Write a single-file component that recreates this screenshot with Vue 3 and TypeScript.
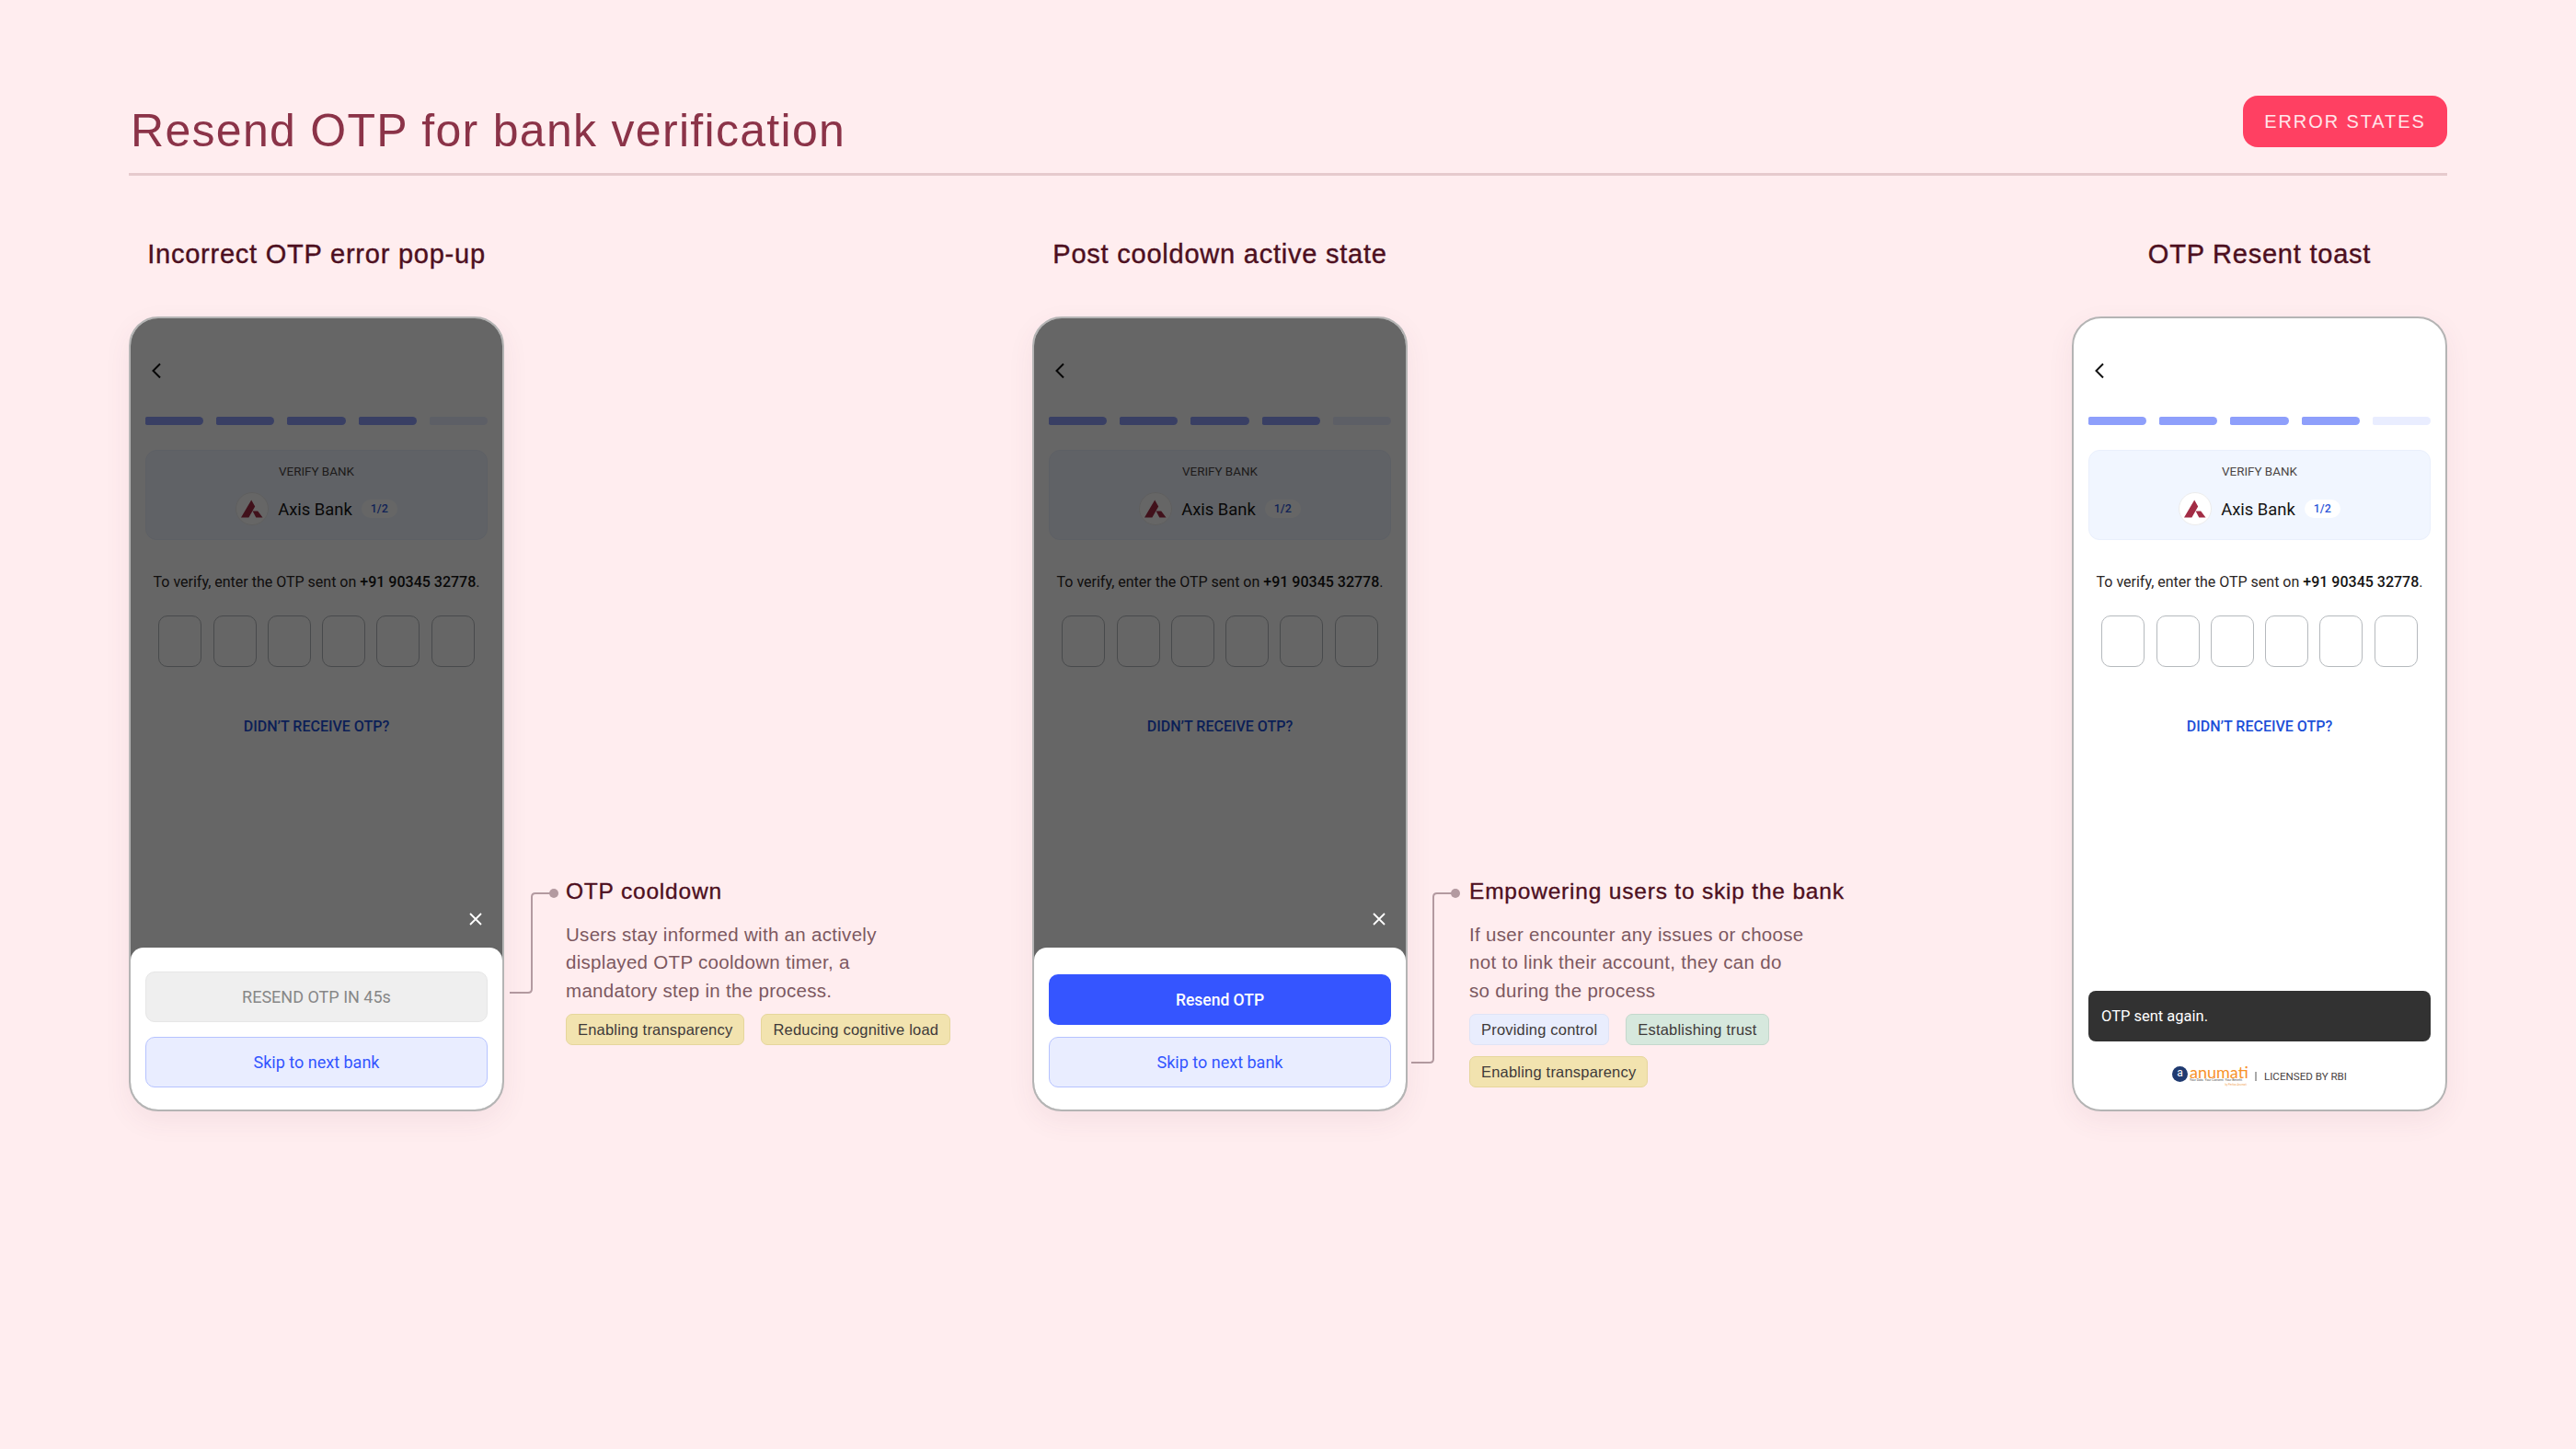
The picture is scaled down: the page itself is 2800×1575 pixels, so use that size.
<template>
  <div class="page">
    <header class="top">
      <h1>Resend OTP for bank verification</h1>
      <span class="badge">ERROR STATES</span>
    </header>

    <div class="row">
      <section v-for="s in screens" :key="s.id" class="group" :class="'group-' + s.id">
        <div class="col">
          <h2>{{ s.title }}</h2>
          <div class="phone">
            <div class="screen">
              <svg class="back" width="24" height="24" viewBox="0 0 24 24" fill="none">
                <path d="M16 4.5 8.5 12l7.5 7.5" stroke="#111" stroke-width="2" />
              </svg>
              <div class="progress">
                <i v-for="n in 5" :key="n" :class="{ done: n < 5 }"></i>
              </div>
              <div class="bank-card">
                <div class="verify">VERIFY BANK</div>
                <div class="bank-row">
                  <span class="bank-logo">
                    <svg width="24" height="20" viewBox="0 0 24 20">
                      <path d="M0 19.5 11.2 0.5l4 7L8.4 19.5zM12.6 12.5h5.6l5.3 7h-7.2z" fill="#a22c45" />
                    </svg>
                  </span>
                  <span class="bank-name">Axis Bank</span>
                  <span class="count">1/2</span>
                </div>
              </div>
              <p class="hint">To verify, enter the OTP sent on <b>+91 90345 32778</b>.</p>
              <div class="otp">
                <i v-for="n in 6" :key="n"></i>
              </div>
              <div class="link">DIDN’T RECEIVE OTP?</div>

              <template v-if="s.id === 'toast'">
                <div class="toast">OTP sent again.</div>
                <div class="foot">
                  <span class="logo-mark">a</span>
                  <span class="logo-text">
                    <span class="logo-name">anumati</span>
                    <span class="logo-tag">Your Data. Your Consent. Your Benefit.</span>
                    <span class="logo-by">by Perfios Anumati</span>
                  </span>
                  <span class="sep"></span>
                  <span class="rbi">LICENSED BY RBI</span>
                </div>
              </template>
            </div>

            <template v-if="s.resend">
              <div class="dim"></div>
              <div class="sheet">
                <svg class="close" width="16" height="16" viewBox="0 0 16 16" fill="none">
                  <path d="M2 2l12 12M14 2 2 14" stroke="#fff" stroke-width="1.8" />
                </svg>
                <div class="btn" :class="s.active ? 'primary' : 'disabled'">{{ s.resend }}</div>
                <div class="btn skip">Skip to next bank</div>
              </div>
            </template>
          </div>
        </div>

        <div v-if="s.note" class="note">
          <svg class="wire" width="54" height="210" viewBox="0 0 54 210" fill="none">
            <path :d="`M0 ${s.note.wireY}H20q4 0 4-4V20q0-4 4-4H48`" stroke="#b39aa0" stroke-width="2" />
            <circle cx="48" cy="16" r="5" fill="#b39aa0" />
          </svg>
          <div class="note-body">
            <h3>{{ s.note.title }}</h3>
            <p>
              <span v-for="line in s.note.lines" :key="line">{{ line }}</span>
            </p>
            <div class="tags">
              <span v-for="t in s.note.tags" :key="t.label" class="tag" :class="t.tone">{{ t.label }}</span>
            </div>
          </div>
        </div>
      </section>
    </div>
  </div>
</template>

<script setup lang="ts">
interface Tag {
  label: string;
  tone: "yellow" | "blue" | "green";
}

interface Screen {
  id: string;
  title: string;
  resend?: string;
  active?: boolean;
  note?: { title: string; lines: string[]; tags: Tag[]; wireY: number };
}

const screens: Screen[] = [
  {
    id: "cooldown",
    title: "Incorrect OTP error pop-up",
    resend: "RESEND OTP IN 45s",
    note: {
      title: "OTP cooldown",
      lines: [
        "Users stay informed with an actively",
        "displayed OTP cooldown timer, a",
        "mandatory step in the process.",
      ],
      tags: [
        { label: "Enabling transparency", tone: "yellow" },
        { label: "Reducing cognitive load", tone: "yellow" },
      ],
      wireY: 124,
    },
  },
  {
    id: "active",
    title: "Post cooldown active state",
    resend: "Resend OTP",
    active: true,
    note: {
      title: "Empowering users to skip the bank",
      lines: [
        "If user encounter any issues or choose",
        "not to link their account, they can do",
        "so during the process",
      ],
      tags: [
        { label: "Providing control", tone: "blue" },
        { label: "Establishing trust", tone: "green" },
        { label: "Enabling transparency", tone: "yellow" },
      ],
      wireY: 200,
    },
  },
  { id: "toast", title: "OTP Resent toast" },
];
</script>

<style>
html,
body {
  margin: 0;
  background: #ffedef;
}
</style>

<style scoped>
.page {
  width: 2800px;
  height: 1575px;
  box-sizing: border-box;
  padding: 104px 140px 0;
  font-family: "Liberation Sans", Arial, sans-serif;
  overflow: hidden;
}

.top {
  display: flex;
  justify-content: space-between;
  align-items: flex-start;
  height: 84px;
  border-bottom: 3px solid #e6cacd;
}

h1 {
  margin: 10px 0 0 2px;
  font-size: 50px;
  line-height: 56px;
  font-weight: 400;
  letter-spacing: 1.3px;
  color: #8b3348;
}

.badge {
  width: 222px;
  height: 56px;
  display: flex;
  align-items: center;
  justify-content: center;
  border-radius: 16px;
  background: #ff4062;
  color: #ffe6ea;
  font-size: 20px;
  letter-spacing: 1.9px;
}

.row {
  display: flex;
}

.group {
  display: flex;
  align-items: flex-end;
}

.group-cooldown {
  width: 982px;
}

.group-active {
  width: 1130px;
}

.col {
  width: 408px;
}

h2 {
  margin: 0;
  height: 153px;
  box-sizing: border-box;
  padding-top: 68px;
  text-align: center;
  font-size: 29px;
  line-height: 34px;
  font-weight: 400;
  letter-spacing: 0.77px;
  color: #4d0f20;
  -webkit-text-stroke: 0.4px #4d0f20;
}

.phone {
  position: relative;
  width: 408px;
  height: 864px;
  box-sizing: border-box;
  border: 2px solid #b4b4b4;
  border-radius: 32px;
  background: #fff;
  box-shadow: 0 10px 30px rgba(120, 60, 90, 0.07);
  font-family: Roboto, Arial, sans-serif;
}

.screen {
  height: 100%;
  display: flex;
  flex-direction: column;
  box-sizing: border-box;
  padding: 45px 16px 0;
  border-radius: 30px;
  overflow: hidden;
}

.back {
  display: block;
  flex: none;
}

.progress {
  display: flex;
  gap: 14px;
  margin-top: 38px;
}

.progress i {
  flex: 1;
  height: 9px;
  border-radius: 2px 5px 5px 2px;
  background: #e9edff;
}

.progress i.done {
  background: #8e9ffb;
}

.bank-card {
  margin-top: 27px;
  height: 98px;
  box-sizing: border-box;
  border: 1px solid #e9effc;
  border-radius: 12px;
  background: #f1f6ff;
  text-align: center;
  flex: none;
}

.verify {
  margin-top: 14px;
  font-size: 13.4px;
  line-height: 18px;
  color: #4b4545;
}

.bank-row {
  display: flex;
  align-items: center;
  justify-content: center;
  gap: 10px;
  margin-top: 13px;
}

.bank-logo {
  width: 36px;
  height: 36px;
  display: flex;
  align-items: center;
  justify-content: center;
  box-sizing: border-box;
  border: 1px solid #ececec;
  border-radius: 50%;
  background: #fff;
}

.bank-name {
  font-size: 18.4px;
  color: #141414;
}

.count {
  height: 20px;
  padding: 0 10px;
  border-radius: 10px;
  background: #fff;
  color: #2f57d8;
  font-size: 12.5px;
  font-weight: 500;
  line-height: 20px;
}

.hint {
  margin: 36px 0 0;
  text-align: center;
  font-size: 16px;
  line-height: 20px;
  white-space: nowrap;
  color: #2b2626;
}

.hint b {
  font-weight: 500;
  color: #141414;
}

.otp {
  display: flex;
  justify-content: center;
  gap: 12.3px;
  margin-top: 26px;
}

.otp i {
  width: 47px;
  height: 56px;
  box-sizing: border-box;
  border: 1px solid #b5b9bd;
  border-radius: 10px;
}

.link {
  margin-top: 55px;
  text-align: center;
  font-size: 16px;
  line-height: 20px;
  font-weight: 500;
  color: #1d4fd8;
}

.toast {
  margin-top: auto;
  height: 55px;
  flex: none;
  box-sizing: border-box;
  padding-left: 14px;
  display: flex;
  align-items: center;
  border-radius: 8px;
  background: #323232;
  color: #fff;
  font-size: 16.5px;
}

.foot {
  height: 74px;
  flex: none;
  display: flex;
  align-items: center;
  justify-content: center;
}

.logo-mark {
  width: 17px;
  height: 17px;
  margin-top: -4px;
  border-radius: 50%;
  background: #1f3a70;
  color: #fff;
  font-size: 12px;
  line-height: 15px;
  text-align: center;
}

.logo-text {
  display: flex;
  flex-direction: column;
  margin-left: 2px;
  width: 62px;
}

.logo-name {
  font-family: Lato, sans-serif;
  font-size: 18px;
  line-height: 14px;
  color: #f7922a;
}

.logo-tag {
  font-size: 3.4px;
  line-height: 5px;
  white-space: nowrap;
  color: #555;
}

.logo-by {
  font-size: 2.8px;
  line-height: 4px;
  text-align: right;
  color: #f2a65a;
}

.sep {
  width: 2px;
  height: 10px;
  margin: 2px 8px 0 9px;
  background: #a9a9a9;
}

.rbi {
  font-size: 11.6px;
  margin-top: 2px;
  color: #4a4444;
  white-space: nowrap;
}

.dim {
  position: absolute;
  inset: 0;
  border-radius: 30px;
  background: rgba(0, 0, 0, 0.6);
}

.sheet {
  position: absolute;
  left: 0;
  right: 0;
  bottom: 0;
  height: 176px;
  box-sizing: border-box;
  padding: 0 16px 24px;
  display: flex;
  flex-direction: column;
  justify-content: flex-end;
  background: #fff;
  border-radius: 14px 14px 30px 30px;
}

.close {
  position: absolute;
  top: -39px;
  right: 21px;
}

.btn {
  height: 55px;
  flex: none;
  box-sizing: border-box;
  display: flex;
  align-items: center;
  justify-content: center;
  border-radius: 10px;
  font-size: 18px;
}

.disabled {
  margin-bottom: 16px;
  background: #efefef;
  border: 1px solid #e6e6e6;
  color: #878787;
}

.primary {
  margin-bottom: 13px;
  background: #3555ff;
  color: #fff;
  font-size: 17.5px;
  font-weight: 500;
}

.skip {
  background: #e9edff;
  border: 1px solid #b6c3ff;
  color: #3355ff;
}

.note {
  display: flex;
  height: 253px;
  margin-left: 6px;
}

.group-active .note {
  margin-left: 4px;
}

.wire {
  flex: none;
  display: block;
}

.note-body {
  width: 420px;
  margin-left: 7px;
}

.group-active .note-body {
  margin-left: 9px;
}

h3 {
  margin: 0;
  font-size: 24.5px;
  line-height: 28px;
  font-weight: 400;
  letter-spacing: 0.8px;
  white-space: nowrap;
  color: #4d0f20;
  -webkit-text-stroke: 0.35px #4d0f20;
}

.note-body p {
  margin: 18px 0 0;
  font-size: 20.5px;
  line-height: 30.4px;
  letter-spacing: 0.3px;
  color: #7c5860;
}

.note-body p span {
  display: block;
  white-space: nowrap;
}

.tags {
  display: flex;
  flex-wrap: wrap;
  gap: 12px 18px;
  margin-top: 10px;
}

.tag {
  height: 34px;
  box-sizing: border-box;
  padding: 0 12px;
  display: flex;
  align-items: center;
  border-radius: 7px;
  font-size: 16.5px;
  letter-spacing: 0.2px;
  color: #3f3a3a;
  white-space: nowrap;
}

.yellow {
  background: #f2e3af;
  border: 1px solid #e6d69c;
}

.blue {
  background: #e9edfd;
  border: 1px solid #dfe4f6;
}

.green {
  background: #d6e8dd;
  border: 1px solid #c4d8cc;
}
</style>
